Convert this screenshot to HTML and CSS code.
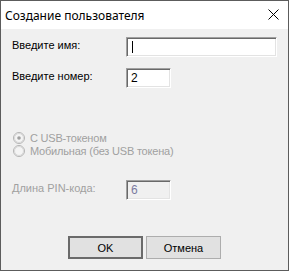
FILE: index.html
```html
<!DOCTYPE html>
<html lang="ru">
<head>
  <meta charset="UTF-8" />
  <title>Создание пользователя</title>
  <link rel="stylesheet" href="styles.css">
</head>
<body>
  <div class="window">
    <div class="titlebar">
      <span class="title">Создание пользователя</span>
      <svg class="close" width="11" height="11" viewBox="0 0 11 11">
        <path d="M0.5 0.5 L10.5 10.5 M10.5 0.5 L0.5 10.5" stroke="#000" stroke-width="1" fill="none"/>
      </svg>
    </div>

    <div class="content">
      <div class="row">
        <span class="label">Введите имя:</span>
        <div class="edit wide"><span class="caret"></span></div>
      </div>
      <div class="row second">
        <span class="label">Введите номер:</span>
        <div class="edit short">2</div>
      </div>

      <div class="radios">
        <div class="radio">
          <svg width="12" height="12" viewBox="0 0 12 12">
            <circle cx="6" cy="6" r="5.5" fill="#f0f0f0" stroke="#b4b4b4"/>
            <circle cx="6" cy="6" r="4.5" fill="#f4f4f4" stroke="#d8d8d8"/>
            <circle cx="6" cy="6" r="1.8" fill="#a0a0a0"/>
          </svg>
          <span>С USB-токеном</span>
        </div>
        <div class="radio">
          <svg width="12" height="12" viewBox="0 0 12 12">
            <circle cx="6" cy="6" r="5.5" fill="#f0f0f0" stroke="#b4b4b4"/>
            <circle cx="6" cy="6" r="4.5" fill="#f4f4f4" stroke="#d8d8d8"/>
          </svg>
          <span>Мобильная (без USB токена)</span>
        </div>
      </div>

      <div class="row pin">
        <span class="label disabled">Длина PIN-кода:</span>
        <div class="edit short off">6</div>
      </div>

      <div class="buttons">
        <div class="button default">OK</div>
        <div class="button">Отмена</div>
      </div>
    </div>
  </div>
</body>
</html>
```

FILE: styles.css
```css
* {
  margin: 0;
  padding: 0;
  box-sizing: border-box;
}

body {
  background: #ffffff;
  font-family: 'Liberation Sans', Arial, sans-serif;
  font-size: 11px;
  color: #000;
}

.window {
  width: 289px;
  height: 271px;
  border: 1px solid #5c5c5c;
  background: #f0f0f0;
  display: flex;
  flex-direction: column;
}

.titlebar {
  height: 28px;
  background: #fff;
  display: flex;
  align-items: center;
  justify-content: space-between;
  padding: 0 9px 0 4px;
}

.title {
  font-family: 'Noto Sans', sans-serif;
  font-size: 12px;
  color: #000;
}

.close {
  margin-top: -1px;
}

.content {
  flex: 1;
  padding: 8px 0 0 11px;
}

.row {
  display: flex;
  align-items: flex-start;
  height: 20px;
}

.row.second {
  margin-top: 11px;
}

.label {
  width: 114px;
  padding-top: 2px;
}

.label.disabled {
  color: #a0a0a0;
}

.edit {
  height: 20px;
  background: #fff;
  border-top: 1px solid #a0a0a0;
  border-left: 1px solid #a0a0a0;
  border-right: 1px solid #fff;
  border-bottom: 1px solid #fff;
  box-shadow: inset 1px 1px 0 #696969, inset -1px -1px 0 #e3e3e3;
  padding: 3px 0 0 4px;
  font-family: 'Liberation Sans', Arial, sans-serif;
  font-size: 12px;
  line-height: 13px;
}

.edit.wide {
  width: 151px;
}

.edit.short {
  width: 45px;
}

.edit.off {
  background: #f0f0f0;
  color: #7a7aa0;
}

.caret {
  display: block;
  width: 1px;
  height: 12px;
  margin: 0 0 0 1px;
  background: #000;
}

.radios {
  margin-top: 43px;
  padding-left: 1px;
  color: #a0a0a0;
}

.radio {
  display: flex;
  align-items: center;
  gap: 5px;
  height: 13px;
  letter-spacing: -0.2px;
}

.row.pin {
  margin-top: 23px;
}

.buttons {
  display: flex;
  justify-content: center;
  gap: 3px;
  margin-top: 36px;
  padding-right: 11px;
}

.button {
  width: 75px;
  height: 23px;
  background: #e1e1e1;
  border: 1px solid #adadad;
  display: flex;
  align-items: center;
  justify-content: center;
  font-size: 11px;
}

.button.default {
  border: 2px solid #6a6a6a;
}
```
